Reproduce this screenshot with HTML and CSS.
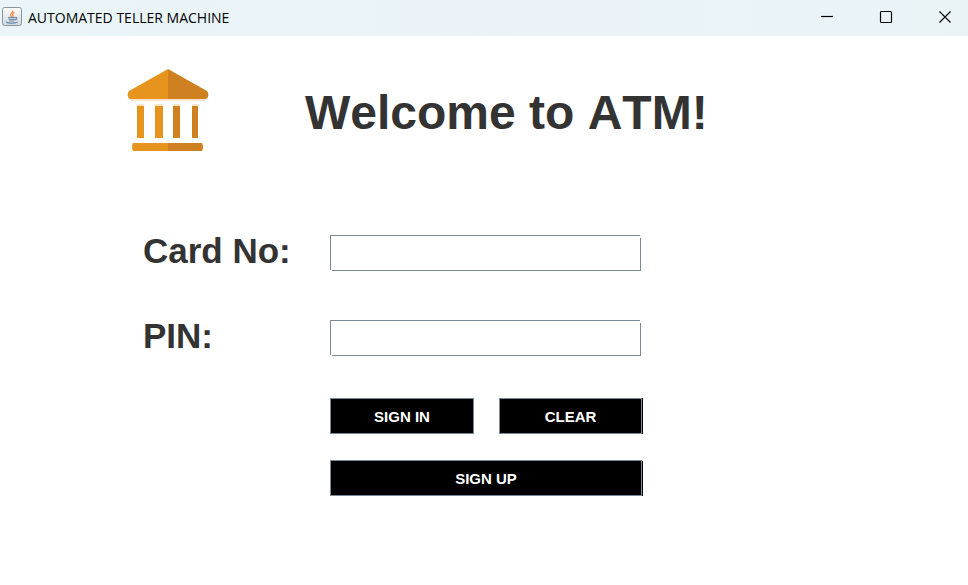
FILE: index.html
```html
<!DOCTYPE html>
<html lang="en">
<head>
<meta charset="utf-8">
<meta name="viewport" content="width=device-width, initial-scale=1">
<title>AUTOMATED TELLER MACHINE</title>
<link rel="stylesheet" href="styles.css">
</head>
<body>
<header class="titlebar">
  <svg class="app-icon" viewBox="0 0 20 20" aria-hidden="true">
    <defs>
      <linearGradient id="tile" x1="0" y1="0" x2="0" y2="1">
        <stop offset="0" stop-color="#fdfdfd"/>
        <stop offset="1" stop-color="#cfd8df"/>
      </linearGradient>
    </defs>
    <rect x=".5" y=".5" width="19" height="18" rx="2" fill="url(#tile)" stroke="#8b959c"/>
    <path d="M10.700 3.500c1.200 2-3.200 2.800-2 5 .3.700.9 1 1 1.500M12.500 5.500c-1.700.9-2.400 1.800-1.500 2.900.3.500.2 1-.4 1.500" fill="none" stroke="#f08a3c" stroke-width="1.300"/>
    <path d="M6 10.700h7.500M6.500 12.500h6.500M7.300 14h5M13.300 10.500c2.200-.4 2 1.800-.5 2.300M4 15c2 1.500 9 1.500 11.500 0" fill="none" stroke="#6d8ca6" stroke-width="1.200"/>
  </svg>
  <span class="titlebar-text">AUTOMATED TELLER MACHINE</span>
  <div class="window-controls">
    <button type="button" class="window-button" aria-label="Minimize">
      <svg viewBox="0 0 14 14"><path d="M1 6.500h12"/></svg>
    </button>
    <button type="button" class="window-button" aria-label="Maximize">
      <svg viewBox="0 0 14 14"><rect x="1.500" y="1.500" width="11" height="11" rx="1"/></svg>
    </button>
    <button type="button" class="window-button" aria-label="Close">
      <svg viewBox="0 0 14 14"><path d="M1.500 1.500l11 11M12.500 1.500l-11 11"/></svg>
    </button>
  </div>
</header>
<main class="content">
  <div class="banner">
    <svg class="logo" viewBox="0 0 82 84" aria-hidden="true">
      <path d="M41 1L2 23Q0 25 1 29L3 31H41Z" fill="#e7941f"/>
      <path d="M41 1L80 23Q82 25 81 29L79 31H41Z" fill="#cf8020"/>
      <path d="M3 31h76v2H3zM10 36h7v2h-7zM28 36h8v2h-8zM46 36h7v2h-7zM65 36h7v2h-7z" fill="#fae3c8"/>
      <path d="M10 38h7v32h-7zM28 38h8v32h-8zM41 75H6q-2 4 0 8h35z" fill="#e7941f"/>
      <path d="M46 38h7v32h-7zM65 38h6v32h-6zM41 75h34q2 4 0 8H41z" fill="#cf8020"/>
    </svg>
    <h1 class="heading">Welcome to ATM!</h1>
  </div>
  <form class="login">
    <label class="field-label" for="card">Card No:</label>
    <input class="field" id="card" type="text">
    <label class="field-label" for="pin">PIN:</label>
    <input class="field" id="pin" type="password">
    <div class="actions">
      <button class="action" type="button">SIGN IN</button>
      <button class="action action-clear" type="reset">CLEAR</button>
      <button class="action action-wide" type="button">SIGN UP</button>
    </div>
  </form>
</main>
</body>
</html>
```

FILE: styles.css
```css
* {
  box-sizing: border-box;
}

body {
  margin: 0;
  background: #fff;
  color: #333;
  font-family: "Liberation Sans", Arial, sans-serif;
  font-kerning: none;
}

.titlebar {
  display: flex;
  align-items: center;
  height: 36px;
  padding-left: 2px;
  background: linear-gradient(90deg, #e9f5f8, #ebf3f9 50%, #eaf4f7);
  color: #000;
}

.app-icon {
  width: 20px;
  height: 20px;
  margin-bottom: 2px;
}

.titlebar-text {
  margin-left: 6px;
  font-family: "Open Sans", sans-serif;
  font-size: 14px;
  line-height: 36px;
}

.window-controls {
  display: flex;
  gap: 13px;
  align-self: stretch;
  margin-left: auto;
}

.window-button {
  display: flex;
  align-items: center;
  justify-content: center;
  width: 46px;
  padding: 0 0 2px;
  border: 0;
  background: none;
}

.window-button svg {
  width: 14px;
  height: 14px;
  fill: none;
  stroke: #000;
  stroke-width: 1.2;
}

.content {
  padding: 32px 32px 0 127px;
}

.banner {
  display: flex;
  align-items: center;
  gap: 96px;
}

.logo {
  flex: none;
  width: 82px;
  height: 84px;
}

.heading {
  margin: 6px 0 0;
  font-size: 48px;
  line-height: 56px;
}

.login {
  display: grid;
  grid-template-columns: 187px minmax(0, 313px);
  row-gap: 49px;
  margin: 83px 0 0 16px;
}

.field-label {
  height: 36px;
  font-size: 35px;
  font-weight: bold;
  line-height: 32px;
}

.field {
  height: 36px;
  margin: 0 2px 0 0;
  padding: 0 7px;
  border: 0;
  border-radius: 0;
  background:
    linear-gradient(#7a8a99, #7a8a99) left top / calc(100% - 1px) 1px no-repeat,
    linear-gradient(#7a8a99, #7a8a99) left top / 1px calc(100% - 1px) no-repeat,
    linear-gradient(#7a8a99, #7a8a99) right bottom / calc(100% - 2px) 1px no-repeat,
    linear-gradient(#7a8a99, #7a8a99) right bottom / 1px calc(100% - 3px) no-repeat,
    #fff;
  font: 16px "Liberation Sans", Arial, sans-serif;
}

.actions {
  display: grid;
  grid-column: 2;
  grid-template-columns: 1fr 1fr;
  gap: 26px 25px;
  margin-top: -7px;
}

.action {
  height: 36px;
  padding: 0;
  border: 1px solid #7a8a99;
  background: #000;
  color: #fff;
  font: bold 15px "Liberation Sans", Arial, sans-serif;
}

.action-clear {
  margin-right: 1px;
  box-shadow: 1px 0 #000;
}

.action-wide {
  grid-column: 1 / -1;
  margin-right: 1px;
  box-shadow: 1px 1px #000;
}
```
